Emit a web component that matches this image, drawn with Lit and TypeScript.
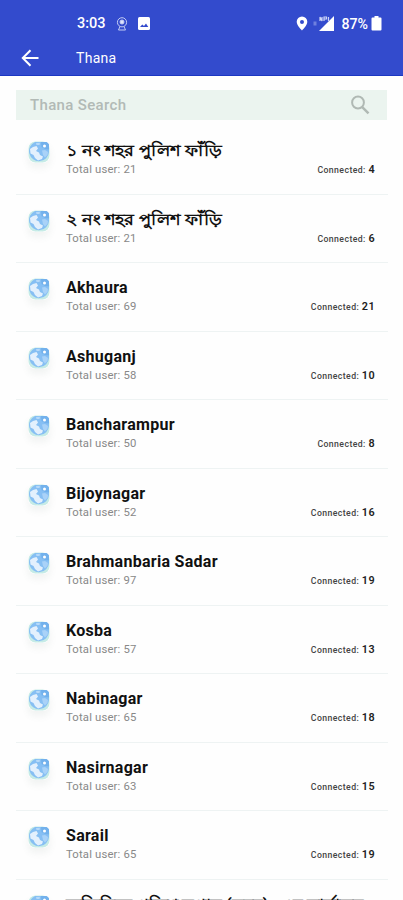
import { LitElement, html, css, svg } from "lit";
import { customElement, property } from "lit/decorators.js";

interface Thana {
  name: string;
  total: number;
  connected: number;
  script?: "bengali" | "bengali long";
}

const THANAS: Thana[] = [
  { name: "১ নং শহর পুলিশ ফাঁড়ি", total: 21, connected: 4, script: "bengali" },
  { name: "২ নং শহর পুলিশ ফাঁড়ি", total: 21, connected: 6, script: "bengali" },
  { name: "Akhaura", total: 69, connected: 21 },
  { name: "Ashuganj", total: 58, connected: 10 },
  { name: "Bancharampur", total: 50, connected: 8 },
  { name: "Bijoynagar", total: 52, connected: 16 },
  { name: "Brahmanbaria Sadar", total: 97, connected: 19 },
  { name: "Kosba", total: 57, connected: 13 },
  { name: "Nabinagar", total: 65, connected: 18 },
  { name: "Nasirnagar", total: 63, connected: 15 },
  { name: "Sarail", total: 65, connected: 19 },
  { name: "অতিরিক্ত পুলিশ সুপার (সদর)- এর কার্যালয়", total: 12, connected: 3, script: "bengali long" },
];

const land = svg`
  <path d="M2 8 5 6 8.500 5 10 7.500 8 10 11 11.500 12 14 15 15.500 14 18 10 19.500 7 17 5.500 14 2.500 12.500Z" fill="#e3f0fd"/>
  <path d="M14 9.500 17 9 20 11 19.500 14 17 16.500 15 14Z" fill="#a9d2f8"/>
  <path d="M8 2 12 1.800 11.500 4 8.500 4Z" fill="#b5d9f9"/>`;

@customElement("thana-row")
export class ThanaRow extends LitElement {
  @property({ attribute: false }) item!: Thana;

  static styles = css`
    :host {
      box-sizing: border-box;
      display: flex;
      height: 68.5px;
      flex: none;
      margin: 0 15px 0 16px;
      padding: 15px 13px 0 12px;
      border-bottom: 1px solid #eef3f3;
      font-family: Roboto, "Noto Sans", sans-serif;
    }
    .globe {
      width: 22px;
      height: 22px;
      flex: none;
      border-radius: 7px;
      box-shadow: 0 5px 7px rgba(90, 110, 100, 0.08);
    }
    .wrap {
      flex: 1;
      display: grid;
      grid-template-columns: 1fr auto;
      grid-template-rows: 20px 18px;
      margin-left: 16px;
      min-width: 0;
    }
    .name {
      grid-column: 1 / 3;
      justify-self: start;
      line-height: 20px;
      font-size: 16px;
      font-weight: 700;
      letter-spacing: 0.28px;
      color: #111;
      white-space: nowrap;
    }
    .bengali {
      letter-spacing: 0;
      font-weight: 700;
      transform: scaleX(1.12);
      transform-origin: 0 50%;
    }
    .long {
      transform: scaleX(1.095);
    }
    .total {
      line-height: 18px;
      font-size: 11.3px;
      letter-spacing: 0.17px;
      color: #888;
    }
    .connected {
      line-height: 18px;
      font-size: 8.7px;
      font-weight: 500;
      letter-spacing: 0.42px;
      color: #444;
      white-space: nowrap;
    }
    .count {
      font-size: 10.8px;
      font-weight: 600;
      color: #222;
    }
  `;

  render() {
    const t = this.item;
    return html`
      <svg class="globe" viewBox="0 0 22 22">
        <rect x="0.5" y="0.5" width="21" height="21" rx="7" fill="#c6ebe6" />
        <path d="M7 1H18Q21 1 21 4V11A10 10 0 1 1 7 1Z" fill="#86bff3" />
        ${land}
        <path d="M13 1H18Q21 1 21 4V8.500L17 8 13.500 6Z" fill="#72b1ec" />
        <circle cx="16.500" cy="5" r="1.500" fill="#fff" />
      </svg>
      <div class="wrap">
        <div class="name ${t.script ?? ""}">${t.name}</div>
        <div class="total">Total user: ${t.total}</div>
        <div class="connected">Connected: <span class="count">${t.connected}</span></div>
      </div>
    `;
  }
}

@customElement("app-root")
export class AppRoot extends LitElement {
  static styles = css`
    :host {
      display: flex;
      flex-direction: column;
      width: 403px;
      height: 900px;
      overflow: hidden;
      background: #fefefe;
      font-family: Roboto, "Noto Sans", sans-serif;
    }
    .header {
      box-sizing: border-box;
      height: 76px;
      flex: none;
      background: #334bcd;
      border-bottom: 1px solid #1c37c2;
      color: #fff;
    }
    .status {
      display: flex;
      align-items: center;
      height: 46px;
      padding: 1px 21px 0 77px;
      box-sizing: border-box;
      font-size: 14.5px;
      font-weight: 500;
    }
    .status svg { flex: none; display: block; }
    .cam { margin-left: 10px; }
    .pic { margin-left: 10px; }
    .space { flex: 1; }
    .sig { margin: 0 6px 0 5px; }
    .pct { font-size: 14.2px; }
    .bat { margin-left: 3px; }
    .bar {
      display: flex;
      align-items: center;
      height: 24px;
      padding-left: 21px;
    }
    .title {
      margin-left: 37px;
      font-size: 14px;
      letter-spacing: 0.3px;
    }
    .search {
      display: flex;
      align-items: center;
      justify-content: space-between;
      box-sizing: border-box;
      flex: none;
      height: 30px;
      margin: 14px 16px 6px;
      padding: 0 17px 0 14px;
      background: #ebf4ef;
      color: #b2bab6;
      font-size: 15px;
      font-weight: 500;
      letter-spacing: 0.34px;
    }
  `;

  render() {
    return html`
      <div class="header">
        <div class="status">
          <span>3:03</span>
          <svg class="cam" width="12" height="14" viewBox="0 0 12 14" fill="none" stroke="#c3ccf3" stroke-width="1">
            <circle cx="6" cy="5.3" r="4.6" />
            <circle cx="6" cy="5" r="2" fill="#dfe5fb" />
            <path d="M4 9.5 2.5 13H9.5L8 9.5" />
          </svg>
          <svg class="pic" width="12" height="13" viewBox="0 0 12 13">
            <rect width="12" height="13" rx="1.5" fill="#fff" />
            <path d="M2 10 4.3 7.500 6 9 8 6.500 10.300 10Z" fill="#334bcd" />
          </svg>
          <span class="space"></span>
          <svg width="12" height="15" viewBox="0 0 12 15">
            <path fill-rule="evenodd" fill="#fff" d="M6 .5A5.3 5.3 0 0 0 .7 5.8C.7 9.5 6 14.5 6 14.5S11.300 9.500 11.300 5.800A5.300 5.300 0 0 0 6 .5ZM6 3.900A2 2 0 1 1 6 7.900 2 2 0 0 1 6 3.900Z" />
          </svg>
          <svg class="sig" width="22" height="15" viewBox="0 0 22 15">
            <path d="M2 5.500V9.500" stroke="#6f80de" stroke-width="3" />
            <path d="M21 0V15H6Z" fill="#fff" />
            <path d="M7 5V1L9 5V1M11 5V1H13.500V3H11M15.500 5V1" stroke="#cdd5f7" stroke-width="1.200" fill="none" />
          </svg>
          <span class="pct">87%</span>
          <svg class="bat" width="11" height="15" viewBox="0 0 11 15">
            <path d="M3.500 0H7.500V1.500H9.500Q10.500 1.500 10.500 2.500V13.500Q10.500 14.500 9.500 14.500H1.500Q.5 14.500 .5 13.500V2.500Q.5 1.500 1.500 1.500H3.500Z" fill="#fff" />
          </svg>
        </div>
        <div class="bar">
          <svg width="18" height="18" viewBox="0 0 18 18" fill="none" stroke="#fff" stroke-width="2">
            <path d="M17.500 9H2M9.500 1.300 1.800 9 9.500 16.700" />
          </svg>
          <span class="title">Thana</span>
        </div>
      </div>
      <div class="search">
        <span>Thana Search</span>
        <svg width="20" height="20" viewBox="0 0 20 20" fill="none" stroke="#b0b9b4" stroke-width="2">
          <circle cx="8" cy="7.500" r="5.900" />
          <path d="M12 11.800 18.500 18.300" stroke-width="2.400" />
        </svg>
      </div>
      ${THANAS.map((t) => html`<thana-row .item=${t}></thana-row>`)}
    `;
  }
}
